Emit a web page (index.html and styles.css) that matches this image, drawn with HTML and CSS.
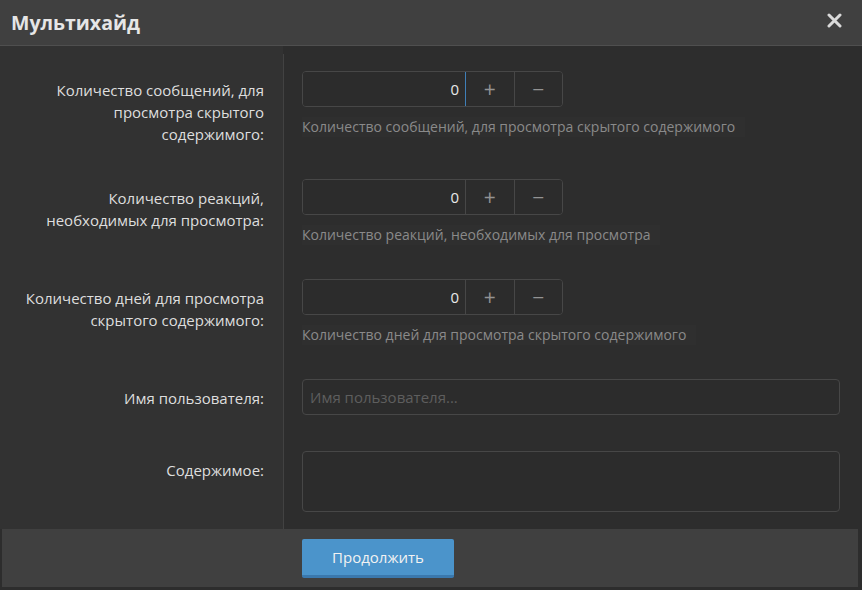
FILE: index.html
```html
<!DOCTYPE html>
<html lang="ru">
<head>
<meta charset="UTF-8">
<meta name="viewport" content="width=device-width, initial-scale=1.0">
<title>Мультихайд</title>
<link rel="stylesheet" href="styles.css">
</head>
<body>
<div class="overlay">
  <div class="overlay-title">
    <span>Мультихайд</span>
    <svg class="overlay-close" width="15" height="15" viewBox="0 0 15 15">
      <path d="M2 2 L13 13 M13 2 L2 13" stroke="#dadada" stroke-width="3" stroke-linecap="round"/>
    </svg>
  </div>

  <div class="form-body">
    <dl class="form-row">
      <dt>Количество сообщений, для просмотра скрытого содержимого:</dt>
      <dd>
        <div class="num-box">
          <input class="num-input focused" type="text" value="0">
          <button class="num-btn">+</button>
          <button class="num-btn">&minus;</button>
        </div>
        <div class="hint"><span>Количество сообщений, для просмотра скрытого содержимого</span></div>
      </dd>
    </dl>

    <dl class="form-row">
      <dt>Количество реакций, необходимых для просмотра:</dt>
      <dd>
        <div class="num-box">
          <input class="num-input" type="text" value="0">
          <button class="num-btn">+</button>
          <button class="num-btn">&minus;</button>
        </div>
        <div class="hint"><span>Количество реакций, необходимых для просмотра</span></div>
      </dd>
    </dl>

    <dl class="form-row">
      <dt>Количество дней для просмотра скрытого содержимого:</dt>
      <dd>
        <div class="num-box">
          <input class="num-input" type="text" value="0">
          <button class="num-btn">+</button>
          <button class="num-btn">&minus;</button>
        </div>
        <div class="hint"><span>Количество дней для просмотра скрытого содержимого</span></div>
      </dd>
    </dl>

    <dl class="form-row">
      <dt>Имя пользователя:</dt>
      <dd class="dd-single">
        <input class="text-input" type="text" placeholder="Имя пользователя...">
      </dd>
    </dl>

    <dl class="form-row">
      <dt>Содержимое:</dt>
      <dd>
        <textarea class="text-area"></textarea>
      </dd>
    </dl>
  </div>

  <div class="form-footer">
    <div class="footer-spacer"></div>
    <div class="footer-main">
      <button class="submit-button">Продолжить</button>
    </div>
  </div>
</div>
</body>
</html>
```

FILE: styles.css
```css
body {
    margin: 0;
    font-family: "Open Sans", "Noto Sans", sans-serif;
    background-color: #2d2d2d;
    color: #dcdcdc;
}

.overlay {
    width: 862px;
    height: 590px;
    display: flex;
    flex-direction: column;
    background-color: #2d2d2d;
}

.overlay-title {
    height: 45px;
    display: flex;
    align-items: center;
    justify-content: space-between;
    padding: 0 20px 0 11px;
    background-color: #404040;
    border-bottom: 1px solid #4f4f4f;
    font-size: 19.5px;
    font-weight: bold;
    color: #e6e6e6;
}

.overlay-close {
    margin-top: -4px;
}

.form-body {
    padding-top: 8px;
    background: linear-gradient(to right, #323232 283px, #2d2d2d 283px);
}

.form-row {
    display: flex;
    margin: 0;
}

.form-row dt {
    width: 245px;
    flex-shrink: 0;
    padding: 25px 19px 17px 19px;
    border-right: 1px solid #424242;
    text-align: right;
    font-size: 15px;
    line-height: 22px;
    color: #dedede;
}

.form-row dd {
    flex: 1;
    margin: 0;
    padding: 17px 22px 17px 18px;
}

.form-row .dd-single {
    padding-bottom: 19px;
}

.num-box {
    display: flex;
    width: 259px;
    height: 34px;
    border: 1px solid #474747;
    border-radius: 4px;
    overflow: hidden;
}

.num-input {
    width: 156px;
    border: none;
    border-right: 1px solid #474747;
    background-color: #2c2c2c;
    color: #e8e8e8;
    font-family: inherit;
    font-size: 15px;
    text-align: right;
    padding: 0 6px 0 0;
    outline: none;
}

.num-input.focused {
    border-right-color: #3f7fb8;
}

.num-btn {
    flex: 1;
    border: none;
    background-color: #2c2c2c;
    color: #939393;
    font-family: inherit;
    font-size: 21px;
    padding: 0;
}

.num-btn + .num-btn {
    border-left: 1px solid #474747;
}

.hint {
    margin-top: 10px;
    font-size: 14px;
    line-height: 20px;
    color: #8a8a8a;
}

.hint span {
    display: inline-block;
    padding: 0 10px 0 0;
    background-color: #2f2f2f;
}

.text-input {
    box-sizing: border-box;
    width: 100%;
    height: 36px;
    border: 1px solid #474747;
    border-radius: 4px;
    background-color: #2c2c2c;
    padding: 0 7px;
    font-family: inherit;
    font-size: 15px;
    color: #dcdcdc;
    outline: none;
}

.text-input::placeholder {
    color: #5e5e5e;
}

.text-area {
    display: block;
    box-sizing: border-box;
    width: 100%;
    height: 61px;
    border: 1px solid #474747;
    border-radius: 4px;
    background-color: #2c2c2c;
    resize: none;
    outline: none;
}

.form-footer {
    display: flex;
    margin: 0 4px 3px 2px;
    padding: 10px 0 9px;
    background-color: #404040;
}

.footer-spacer {
    width: 300px;
}

.submit-button {
    width: 152px;
    height: 39px;
    border: none;
    border-bottom: 3px solid #3a78ad;
    border-radius: 2px;
    background-color: #4b94cb;
    color: #f2f2f2;
    font-family: inherit;
    font-size: 15px;
    cursor: pointer;
}
```
